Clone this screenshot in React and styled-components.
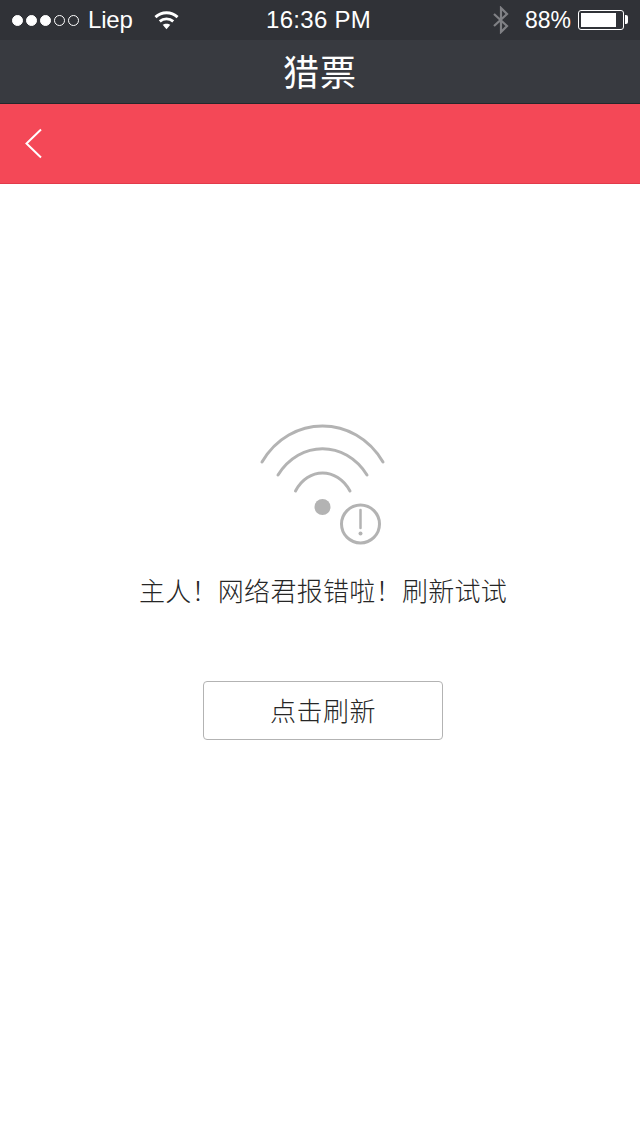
import styled, { createGlobalStyle } from 'styled-components'

const GlobalStyle = createGlobalStyle`
  html, body {
    margin: 0;
    padding: 0;
    background: #fff;
  }
  * {
    box-sizing: border-box;
  }
`

const S = {
  Page: styled.div`
    width: 640px;
    height: 1136px;
    display: flex;
    flex-direction: column;
    overflow: hidden;
    background: #fff;
    font-family: 'Noto Sans CJK SC', 'Liberation Sans', sans-serif;
  `,
  StatusBar: styled.div`
    height: 40px;
    display: flex;
    align-items: center;
    padding: 0 16px 0 12px;
    background: #303237;
    color: #fff;
    font-family: 'Liberation Sans', sans-serif;
    font-size: 24px;
  `,
  StatusLeft: styled.div`
    width: 254px;
    display: flex;
    align-items: center;
  `,
  Signal: styled.div`
    display: flex;
    gap: 3px;
    margin-right: 9px;
  `,
  Dot: styled.span`
    width: 11px;
    height: 11px;
    border-radius: 50%;
    border: 1px solid #fff;
    background: ${({ $on }) => ($on ? '#fff' : 'transparent')};
  `,
  Carrier: styled.span`
    width: 66px;
    letter-spacing: -0.2px;
  `,
  Time: styled.span`
    letter-spacing: 0.3px;
  `,
  StatusRight: styled.div`
    margin-left: auto;
    display: flex;
    align-items: center;
  `,
  Percent: styled.span`
    margin: 0 7px 0 16px;
    font-size: 23px;
  `,
  Battery: styled.div`
    width: 46px;
    height: 20px;
    padding: 2px 7px 2px 2px;
    border: 1.5px solid #fff;
    border-radius: 3px;
    position: relative;
    &::after {
      content: '';
      position: absolute;
      right: -5px;
      top: 4px;
      width: 3px;
      height: 9px;
      border-radius: 0 2px 2px 0;
      background: #fff;
    }
  `,
  BatteryFill: styled.div`
    height: 100%;
    background: #fff;
  `,
  NavBar: styled.div`
    height: 64px;
    display: flex;
    align-items: center;
    justify-content: center;
    padding-bottom: 4px;
    background: #383a40;
    border-bottom: 1px solid #25272b;
    color: #fff;
    font-size: 36px;
    letter-spacing: 1px;
    line-height: 1;
  `,
  RedBar: styled.div`
    height: 80px;
    display: flex;
    align-items: center;
    padding-left: 24px;
    background: #f44857;
    border-bottom: 1px solid #e23a4a;
  `,
  Content: styled.div`
    flex: 1;
    display: flex;
    flex-direction: column;
    align-items: center;
    padding: 231px 0 0 6px;
  `,
  Message: styled.div`
    margin-top: 15px;
    color: #262626;
    font-size: 26px;
    font-weight: 300;
    letter-spacing: 0.3px;
    line-height: 40px;
    white-space: nowrap;
  `,
  RefreshButton: styled.button`
    width: 240px;
    height: 59px;
    margin-top: 71px;
    padding: 0 0 3px;
    background: #fff;
    border: 1px solid #b3b3b3;
    border-radius: 4px;
    color: #262626;
    font-family: inherit;
    font-size: 26px;
    font-weight: 300;
    letter-spacing: 0.5px;
  `,
}

const WifiIcon = () => (
  <svg width="25" height="20" viewBox="0 0 26 20">
    <path d="M1.5 7 C8 1 18 1 24.5 7" fill="none" stroke="#fff" strokeWidth="3" />
    <path d="M6 11.5 C10 8 16 8 20 11.5" fill="none" stroke="#fff" strokeWidth="3" />
    <path d="M9 15 L13 19.500 L17 15 C15 13.400 11 13.400 9 15 Z" fill="#fff" />
  </svg>
)

const BluetoothIcon = () => (
  <svg width="16" height="28" viewBox="0 0 16 28">
    <path
      d="M1 8 L14 20 L8 26 L8 2 L14 8 L1 20"
      fill="none"
      stroke="#808185"
      strokeWidth="2.2"
    />
  </svg>
)

const BackIcon = () => (
  <svg width="20" height="32" viewBox="0 0 20 32">
    <path d="M17 1.500 L2.500 15.500 L17 29.500" fill="none" stroke="#fff" strokeWidth="2" />
  </svg>
)

const NetworkErrorIcon = () => (
  <svg width="150" height="140" viewBox="248 415 150 140">
    <g fill="none" stroke="#b3b3b3" strokeWidth="3" strokeLinecap="round">
      <path d="M262 462 C290 414 355 414 383 462" />
      <path d="M278 475 C300 440 345 440 367 475" />
      <path d="M295.500 491 C308 467 337 467 350 491" />
      <circle cx="360.500" cy="524" r="19" />
      <path d="M360.500 510 V528" strokeWidth="2.500" />
    </g>
    <circle cx="322.500" cy="507" r="8" fill="#b3b3b3" />
    <circle cx="360.500" cy="533.500" r="2" fill="#b3b3b3" />
  </svg>
)

const App = () => {
  return (
    <S.Page>
      <GlobalStyle />
      <S.StatusBar>
        <S.StatusLeft>
          <S.Signal>
            {[true, true, true, false, false].map((on, i) => (
              <S.Dot key={i} $on={on} />
            ))}
          </S.Signal>
          <S.Carrier>Liep</S.Carrier>
          <WifiIcon />
        </S.StatusLeft>
        <S.Time>16:36 PM</S.Time>
        <S.StatusRight>
          <BluetoothIcon />
          <S.Percent>88%</S.Percent>
          <S.Battery>
            <S.BatteryFill />
          </S.Battery>
        </S.StatusRight>
      </S.StatusBar>
      <S.NavBar>猎票</S.NavBar>
      <S.RedBar>
        <BackIcon />
      </S.RedBar>
      <S.Content>
        <NetworkErrorIcon />
        <S.Message>主人！网络君报错啦！刷新试试</S.Message>
        <S.RefreshButton>点击刷新</S.RefreshButton>
      </S.Content>
    </S.Page>
  )
}

export default App
